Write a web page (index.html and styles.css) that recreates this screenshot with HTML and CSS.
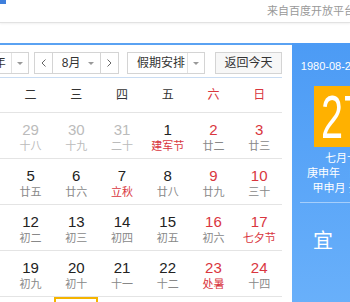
FILE: index.html
```html
<!DOCTYPE html>
<html lang="zh-CN">
<head>
  <meta charset="UTF-8">
  <meta name="viewport" content="width=device-width, initial-scale=1.0">
  <title>万年历</title>
  <link rel="stylesheet" href="styles.css">
</head>
<body>

  <div class="topbar">
    <div class="logo"></div>
    <div class="source">来自百度开放平台</div>
  </div>

  <div class="widget">
    <div class="cal-left">
      <div class="toolbar">
        <div class="select year-sel">
          <span class="sel-text">1980年</span>
          <span class="sel-arrow"><i class="tri"></i></span>
        </div>
        <div class="nav-group">
          <span class="nav-btn">
            <svg width="5" height="8" viewBox="0 0 5 8"><polyline points="4.5,0.5 1,4 4.5,7.5" fill="none" stroke="#666" stroke-width="1"/></svg>
          </span>
          <span class="month-sel">
            <span class="sel-text">8月</span>
            <span class="month-arrow"><i class="tri"></i></span>
          </span>
          <span class="nav-btn">
            <svg width="5" height="8" viewBox="0 0 5 8"><polyline points="0.5,0.5 4,4 0.5,7.5" fill="none" stroke="#666" stroke-width="1"/></svg>
          </span>
        </div>
        <div class="select holiday-sel">
          <span class="sel-text">假期安排</span>
          <span class="sel-arrow"><i class="tri"></i></span>
        </div>
        <div class="today-btn">返回今天</div>
      </div>

      <div class="week-head">
        <span>一</span><span>二</span><span>三</span><span>四</span><span>五</span>
        <span class="red">六</span><span class="red">日</span>
      </div>

      <div id="weeks"></div>
    </div>

    <div class="cal-right">
      <div class="date">1980-08-27 星期三</div>
      <div class="today-box"><span class="big">27</span></div>
      <div class="lunar-info">
        <div>七月十七</div>
        <div>庚申年 【猴年】</div>
        <div>甲申月 壬申日</div>
      </div>
      <div class="sep"></div>
      <div class="yiji">
        <span class="yj">宜</span>
        <span class="yj">忌</span>
      </div>
    </div>
  </div>

  <script>
    // [day, lunar, prev month?, holiday?]
    const days = [
      [28, '十七', 1], [29, '十八', 1], [30, '十九', 1], [31, '二十', 1],
      [1, '建军节', 0, 1], [2, '廿二'], [3, '廿三'],
      [4, '廿四'], [5, '廿五'], [6, '廿六'], [7, '立秋', 0, 1], [8, '廿八'], [9, '廿九'], [10, '三十'],
      [11, '七月'], [12, '初二'], [13, '初三'], [14, '初四'], [15, '初五'], [16, '初六'], [17, '七夕节', 0, 1],
      [18, '初八'], [19, '初九'], [20, '初十'], [21, '十一'], [22, '十二'], [23, '处暑', 0, 1], [24, '十四'],
      [25, '中元节', 0, 1], [26, '十六'], [27, '十七'], [28, '十八'], [29, '十九'], [30, '二十'], [31, '廿一']
    ];

    const weeks = document.getElementById('weeks');
    for (let w = 0; w < days.length / 7; w++) {
      const row = document.createElement('div');
      row.className = 'week';
      for (let i = 0; i < 7; i++) {
        const [num, lunar, prev, holiday] = days[w * 7 + i];
        const cell = document.createElement('div');
        cell.className = 'day';
        if (prev) cell.classList.add('other');
        if (i >= 5 && !prev) cell.classList.add('weekend');
        if (w === 4 && num === 27) cell.classList.add('today');
        cell.innerHTML = `<span class="num">${num}</span><span class="lunar${holiday ? ' fest' : ''}">${lunar}</span>`;
        row.appendChild(cell);
      }
      weeks.appendChild(row);
    }
  </script>
</body>
</html>
```

FILE: styles.css
```css
body {
  margin: 0;
  width: 350px;
  height: 302px;
  overflow: hidden;
  background-color: #fff;
  color: #333;
  font-family: "Liberation Sans", "Noto Sans CJK SC", sans-serif;
}
.topbar {
  height: 22px;
  display: flex;
  justify-content: space-between;
  align-items: flex-start;
  border-bottom: 1px solid #e2e2e2;
  box-shadow: 0 1px 2px rgba(0, 0, 0, 0.06);
}
.logo {
  width: 6px;
  height: 4px;
  background-color: #3f7fdc;
}
.source {
  font-size: 11px;
  line-height: 14px;
  margin-top: 4px;
  margin-right: -5px;
  color: #999;
  white-space: nowrap;
}
.widget {
  margin-top: 20px;
  display: flex;
}
.cal-left {
  flex: 0 0 auto;
  width: 320px;
  margin-left: -48px;
  padding: 0 10px;
  border-top: 2px solid #5aa2f2;
}
.toolbar {
  display: flex;
  padding: 7px 0 3px;
  font-size: 12px;
}
.select,
.nav-group,
.today-btn {
  box-sizing: border-box;
  height: 22px;
  border: 1px solid #d4d4d4;
  display: flex;
  align-items: stretch;
  line-height: 20px;
  color: #333;
}
.sel-text {
  flex: 1;
  white-space: nowrap;
}
.sel-arrow {
  width: 16px;
  border-left: 1px solid #e2e2e2;
  display: flex;
  justify-content: center;
  align-items: center;
}
.tri {
  width: 0;
  height: 0;
  border-left: 3px solid transparent;
  border-right: 3px solid transparent;
  border-top: 3px solid #999;
}
.year-sel {
  width: 67px;
}
.year-sel .sel-text {
  padding-left: 4px;
}
.nav-group {
  width: 85px;
  margin-left: 5px;
}
.nav-btn {
  width: 17px;
  display: flex;
  justify-content: center;
  align-items: center;
}
.month-sel {
  width: 50px;
  box-sizing: border-box;
  border-left: 1px solid #d4d4d4;
  border-right: 1px solid #d4d4d4;
  display: flex;
}
.month-sel .sel-text {
  padding-left: 9px;
}
.month-arrow {
  width: 18px;
  display: flex;
  justify-content: center;
  align-items: center;
}
.holiday-sel {
  width: 78px;
  margin-left: 8px;
}
.holiday-sel .sel-text {
  padding-left: 9px;
}
.today-btn {
  width: 67px;
  margin-left: 10px;
  justify-content: center;
  background-color: #f7f7f7;
}
.week-head {
  display: grid;
  grid-template-columns: repeat(7, 1fr);
  height: 34px;
  line-height: 34px;
  border-top: 1px solid #c9dcf2;
  border-bottom: 1px solid #e4e4e4;
  font-size: 12px;
  text-align: center;
}
.red {
  color: #d9363e;
}
.week {
  display: grid;
  grid-template-columns: repeat(7, 1fr);
  height: 45px;
  border-bottom: 1px solid #e4e4e4;
}
.day {
  box-sizing: border-box;
  padding-top: 8px;
  text-align: center;
}
.num {
  display: block;
  font-size: 15px;
  line-height: 18px;
  color: #222;
}
.lunar {
  display: block;
  font-size: 11px;
  line-height: 14px;
  color: #888;
  white-space: nowrap;
}
.lunar.fest {
  color: #d9363e;
}
.weekend .num {
  color: #d9363e;
}
.other .num {
  color: #bbb;
}
.other .lunar {
  color: #bbb;
}
.day.today {
  margin: 0 1px;
  box-shadow: inset 0 0 0 2px #f5b400;
}
.cal-right {
  flex: 0 0 110px;
  padding-top: 16px;
  background: linear-gradient(to bottom, #4c9bf5, #6db3fb);
  color: #fff;
  text-align: center;
}
.date {
  font-size: 11px;
  line-height: 15px;
  white-space: nowrap;
}
.today-box {
  box-sizing: border-box;
  width: 66px;
  height: 61px;
  margin: 12px auto 0;
  padding-left: 7px;
  background-color: #ffb100;
  line-height: 61px;
  text-align: left;
  white-space: nowrap;
}
.big {
  display: inline-block;
  font-size: 62px;
  transform: scaleX(0.64);
  transform-origin: left center;
}
.lunar-info {
  margin-top: 4px;
  font-size: 11px;
  line-height: 15px;
  white-space: nowrap;
}
.sep {
  margin: 6px 8px 0;
  border-top: 1px solid rgba(255, 255, 255, 0.45);
}
.yiji {
  display: flex;
  justify-content: center;
  padding-top: 28px;
}
.yj {
  width: 48px;
  font-size: 20px;
  line-height: 20px;
}
```
